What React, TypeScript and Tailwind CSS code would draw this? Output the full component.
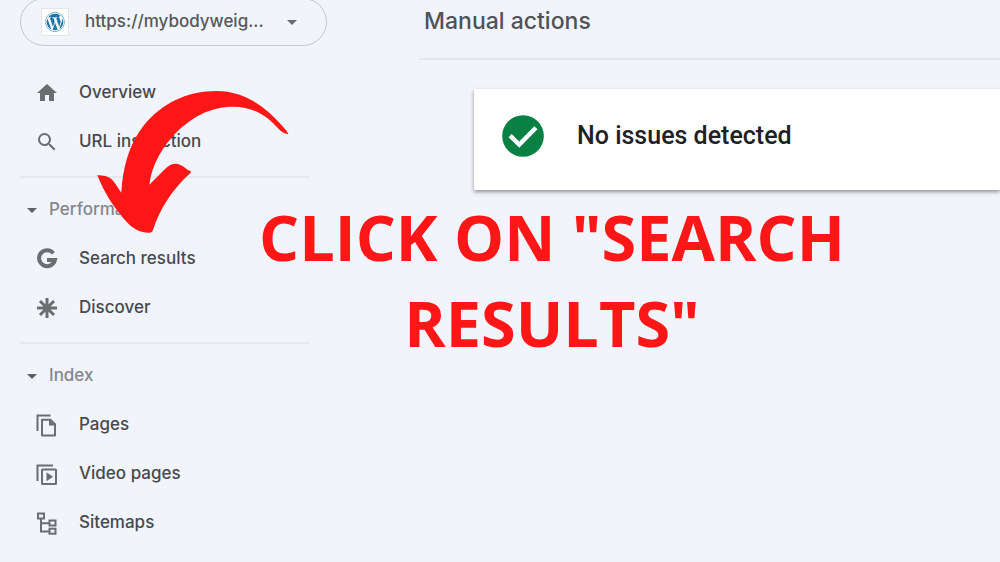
import type { ReactNode } from "react";
import { FaWordpress } from "react-icons/fa";
import { MdArrowDropDown, MdHome, MdSearch } from "react-icons/md";

interface NavItemProps {
  icon: ReactNode;
  label: string;
}

interface NavGroupProps {
  title?: string;
  items: NavItemProps[];
}

function GoogleIcon() {
  return (
    <svg viewBox="0 0 24 24" className="size-6" fill="none" stroke="currentColor" strokeWidth="4">
      <path d="M18.4 6.2A8 8 0 1 0 19.9 13H12" />
    </svg>
  );
}

function DiscoverIcon() {
  return (
    <svg viewBox="0 0 24 24" className="size-6" fill="none" stroke="currentColor" strokeWidth="3">
      <path d="M12 2v20M2 12h20M5 5l14 14M19 5L5 19" />
    </svg>
  );
}

function PagesIcon() {
  return (
    <svg viewBox="0 0 24 24" className="size-6" fill="none" stroke="currentColor" strokeWidth="2">
      <path d="M2.5 18V2.5H15.5" />
      <path d="M8 6.7H15.5L20 11.2V22.5H7V6.7Z" strokeLinejoin="round" />
      <path d="M14 6.5V12.5H20Z" fill="currentColor" stroke="none" />
    </svg>
  );
}

function VideoPagesIcon() {
  return (
    <svg viewBox="0 0 24 24" className="size-6" fill="none" stroke="currentColor" strokeWidth="2">
      <path d="M2.5 19V3.5H18" />
      <rect x="7" y="7.5" width="14" height="14.5" rx="0.5" />
      <path d="M11.5 10.2V19.3L18 14.8Z" fill="currentColor" stroke="none" />
    </svg>
  );
}

function SitemapsIcon() {
  return (
    <svg viewBox="0 0 24 24" className="size-6" fill="none" stroke="currentColor" strokeWidth="2">
      <rect x="3" y="2.5" width="6" height="5" />
      <rect x="14.5" y="9.5" width="6" height="5" />
      <rect x="14.5" y="17.7" width="6" height="5" />
      <path d="M6 7.5v13h8.5M6 12.3h8.5" />
    </svg>
  );
}

function CheckIcon() {
  return (
    <svg viewBox="0 0 24 24" className="size-[50px]" fill="none">
      <circle cx="12" cy="12" r="10" fill="#0b8043" />
      <path d="M5.8 11.8L10.2 16.1L18.2 8" stroke="#fff" strokeWidth="2.1" />
    </svg>
  );
}

const groups: NavGroupProps[] = [
  {
    items: [
      { icon: <MdHome className="size-6" />, label: "Overview" },
      { icon: <MdSearch className="size-6" />, label: "URL inspection" },
    ],
  },
  {
    title: "Performance",
    items: [
      { icon: <GoogleIcon />, label: "Search results" },
      { icon: <DiscoverIcon />, label: "Discover" },
    ],
  },
  {
    title: "Index",
    items: [
      { icon: <PagesIcon />, label: "Pages" },
      { icon: <VideoPagesIcon />, label: "Video pages" },
      { icon: <SitemapsIcon />, label: "Sitemaps" },
    ],
  },
];

function NavItem({ icon, label }: NavItemProps) {
  return (
    <li>
      <a href="#" className="flex h-[49px] items-center gap-5 pl-[15px] text-[#6b6d70]">
        {icon}
        <span className="text-[#47494c]">{label}</span>
      </a>
    </li>
  );
}

function NavGroup({ title, items }: NavGroupProps) {
  return (
    <section className="mr-[17px] border-b-2 border-[#e6e7ea] pb-2.5 last:border-b-0">
      {title && (
        <button className="mt-[7px] flex h-[49px] items-center gap-[5px] text-[#85878b]">
          <MdArrowDropDown className="size-6 text-[#5f6164]" />
          {title}
        </button>
      )}
      <ul>
        {items.map((item) => (
          <NavItem key={item.label} {...item} />
        ))}
      </ul>
    </section>
  );
}

function Sidebar() {
  return (
    <aside className="w-[327px] shrink-0 pl-5 text-[17px] font-medium">
      <button className="-mt-0.5 mb-[22px] flex h-12 w-full items-center rounded-full border border-[#c4c6c9] pr-[22px] pl-5 text-[#55575a]">
        <span className="flex size-7 items-center justify-center border border-[#e3e5e8] bg-white">
          <FaWordpress className="size-5 text-[#1c77a8]" />
        </span>
        <span className="ml-4 flex-1 text-left">https://mybodyweig...</span>
        <MdArrowDropDown className="size-6 text-[#6b6d70]" />
      </button>
      <nav>
        {groups.map((group) => (
          <NavGroup key={group.title ?? "top"} {...group} />
        ))}
      </nav>
    </aside>
  );
}

function Annotation() {
  return (
    <div className="pointer-events-none absolute inset-0 text-[#ff1616]">
      <svg viewBox="0 0 660 480" className="absolute top-20 left-20 w-[220px]" fill="currentColor">
        <path d="M625 163C612 162 603 154 594 145C560 105 515 80 460 80C390 80 335 112 288 158C247 200 215 255 208 314L255 267C270 253 284 248 300 254C313 259 319 269 333 274C333 278 331 280 328 282C276 330 240 386 219 450C217 456 214 458 208 458C184 459 162 449 144 430C104 388 73 339 52 286C69 286 85 288 97 300C108 312 115 326 124 338C128 265 146 195 190 138C245 70 320 33 410 33C500 33 563 88 607 138C615 147 623 154 625 163Z" />
      </svg>
      <p className="absolute top-[194px] left-[232px] w-[640px] text-center font-['Open_Sans',sans-serif] text-[63px] leading-[86px] font-bold">
        CLICK ON "SEARCH RESULTS"
      </p>
    </div>
  );
}

export default function App() {
  return (
    <div className="relative flex min-h-screen overflow-hidden bg-[#f1f4fb] font-[Inter,sans-serif]">
      <Sidebar />
      <main className="ml-[92px] flex-1">
        <h1 className="flex h-[60px] border-b-2 border-[#e4e6ea] pt-[5px] pl-[5px] text-[23px] leading-8 font-medium text-[#505256]">
          Manual actions
        </h1>
        <div className="mt-[29px] ml-[55px] flex h-[101px] items-center gap-[29px] bg-white pb-2 pl-6 shadow-[0_2px_4px_rgba(0,0,0,0.4)]">
          <CheckIcon />
          <span className="font-[Roboto,sans-serif] text-[25px] font-medium text-[#212124]">
            No issues detected
          </span>
        </div>
      </main>
      <Annotation />
    </div>
  );
}
